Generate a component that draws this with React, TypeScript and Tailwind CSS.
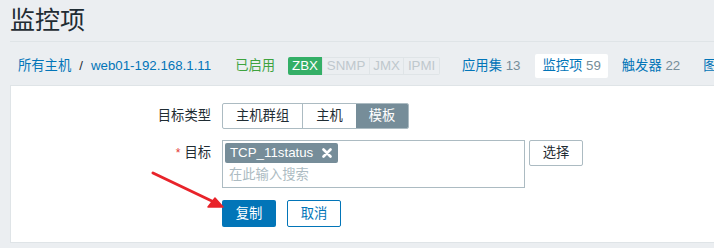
import React from 'react';

const font = 'font-["Liberation_Sans","Noto_Sans_CJK_SC",sans-serif]';

function NavLink({ label, count }: { label: string; count: number }) {
  return (
    <span className="text-[#0275b8]">
      {label} <span className="text-[#768d99]">{count}</span>
    </span>
  );
}

function App() {
  return (
    <div className={`relative w-[714px] h-[248px] overflow-hidden bg-[#ebeef1] text-[13.3px] text-[#1f2c33] ${font}`}>
      {/* Header */}
      <div className="ml-[10px] h-[42px] border-b border-[#dfe4e7] flex items-center">
        <h1 className="text-[25px] leading-none text-[#1f2c33] -mt-[1px]">监控项</h1>
      </div>

      {/* Host nav */}
      <div className="h-[43px] pt-[5px] flex items-center whitespace-nowrap">
        <span className="ml-[18px] text-[#0275b8]">所有主机</span>
        <span className="ml-[8px] text-[#1f2c33]">/</span>
        <span className="ml-[8px] text-[#0275b8]">web01-192.168.1.11</span>
        <span className="ml-[24px] text-[#3ea33f]">已启用</span>
        <div className="ml-[13px] flex h-[18px] text-[13.3px] leading-[16px]">
          <span className="w-[34px] text-center bg-[#34af67] text-white rounded-l-[2px] leading-[18px]">ZBX</span>
          <span className="w-[48px] text-center border border-[#dfe4e7] text-[#bfc8cd]">SNMP</span>
          <span className="w-[34px] text-center border border-l-0 border-[#dfe4e7] text-[#bfc8cd]">JMX</span>
          <span className="w-[36px] text-center border border-l-0 border-[#dfe4e7] text-[#bfc8cd] rounded-r-[2px]">IPMI</span>
        </div>
        <span className="ml-[22px]"><NavLink label="应用集" count={13} /></span>
        <span className="ml-[15px] h-[24px] px-[7px] flex items-center bg-white rounded-[2px]">
          <NavLink label="监控项" count={59} />
        </span>
        <span className="ml-[14px]"><NavLink label="触发器" count={22} /></span>
        <span className="ml-[23px] text-[#0275b8]">图形</span>
      </div>

      {/* Form panel */}
      <div className="ml-[10px] w-[800px] h-[158px] bg-white border border-[#dfe4e7] pt-[17px]">
        <div className="flex flex-col gap-[11px]">
          <div className="flex items-center">
            <label className="w-[200px] text-right">目标类型</label>
            <div className="ml-[11px] flex h-[26px] border border-[#acbbc2] rounded-[2px] overflow-hidden">
              <span className="px-[13px] flex items-center border-r border-[#acbbc2]">主机群组</span>
              <span className="px-[13px] flex items-center">主机</span>
              <span className="px-[13px] flex items-center bg-[#768d99] text-white">模板</span>
            </div>
          </div>

          <div className="flex items-start">
            <label className="w-[200px] pt-[3px] text-right">
              <span className="text-[#e33734] mr-[4px] text-[12px]">*</span>目标
            </label>
            <div className="ml-[11px] w-[303px] h-[48px] border border-[#acbbc2] px-[2px] pt-[2px]">
              <span className="inline-flex items-center h-[20px] pl-[5px] pr-[6px] bg-[#768d99] text-white rounded-[2px]">
                TCP_11status
                <svg className="ml-[9px]" width="10" height="10" viewBox="0 0 10 10">
                  <path d="M1.5 1.5 L8.5 8.5 M8.5 1.5 L1.5 8.5" stroke="white" strokeWidth="2.6" strokeLinecap="round" />
                </svg>
              </span>
              <div className="pl-[4px] mt-[2px] text-[#acbbc2]">在此输入搜索</div>
            </div>
            <button className="ml-[4px] w-[54px] h-[26px] border border-[#acbbc2] rounded-[2px] bg-white text-[#1f2c33]">
              选择
            </button>
          </div>

          <div className="flex mt-[1px]">
            <div className="w-[200px]" />
            <button className="ml-[11px] w-[54px] h-[27px] bg-[#0275b8] text-white rounded-[2px]">复制</button>
            <button className="ml-[11px] w-[54px] h-[27px] border border-[#0275b8] text-[#0275b8] bg-white rounded-[2px]">取消</button>
          </div>
        </div>
      </div>

      {/* Annotation arrow */}
      <svg className="absolute left-0 top-0 pointer-events-none" width="714" height="248">
        <line x1="153" y1="173" x2="216" y2="203" stroke="#e8232a" strokeWidth="3" strokeLinecap="round" />
        <path d="M223 207 L208 207 L215 198 Z" fill="#e8232a" stroke="#e8232a" strokeWidth="1.5" strokeLinejoin="round" />
      </svg>
    </div>
  );
}

export default App;
